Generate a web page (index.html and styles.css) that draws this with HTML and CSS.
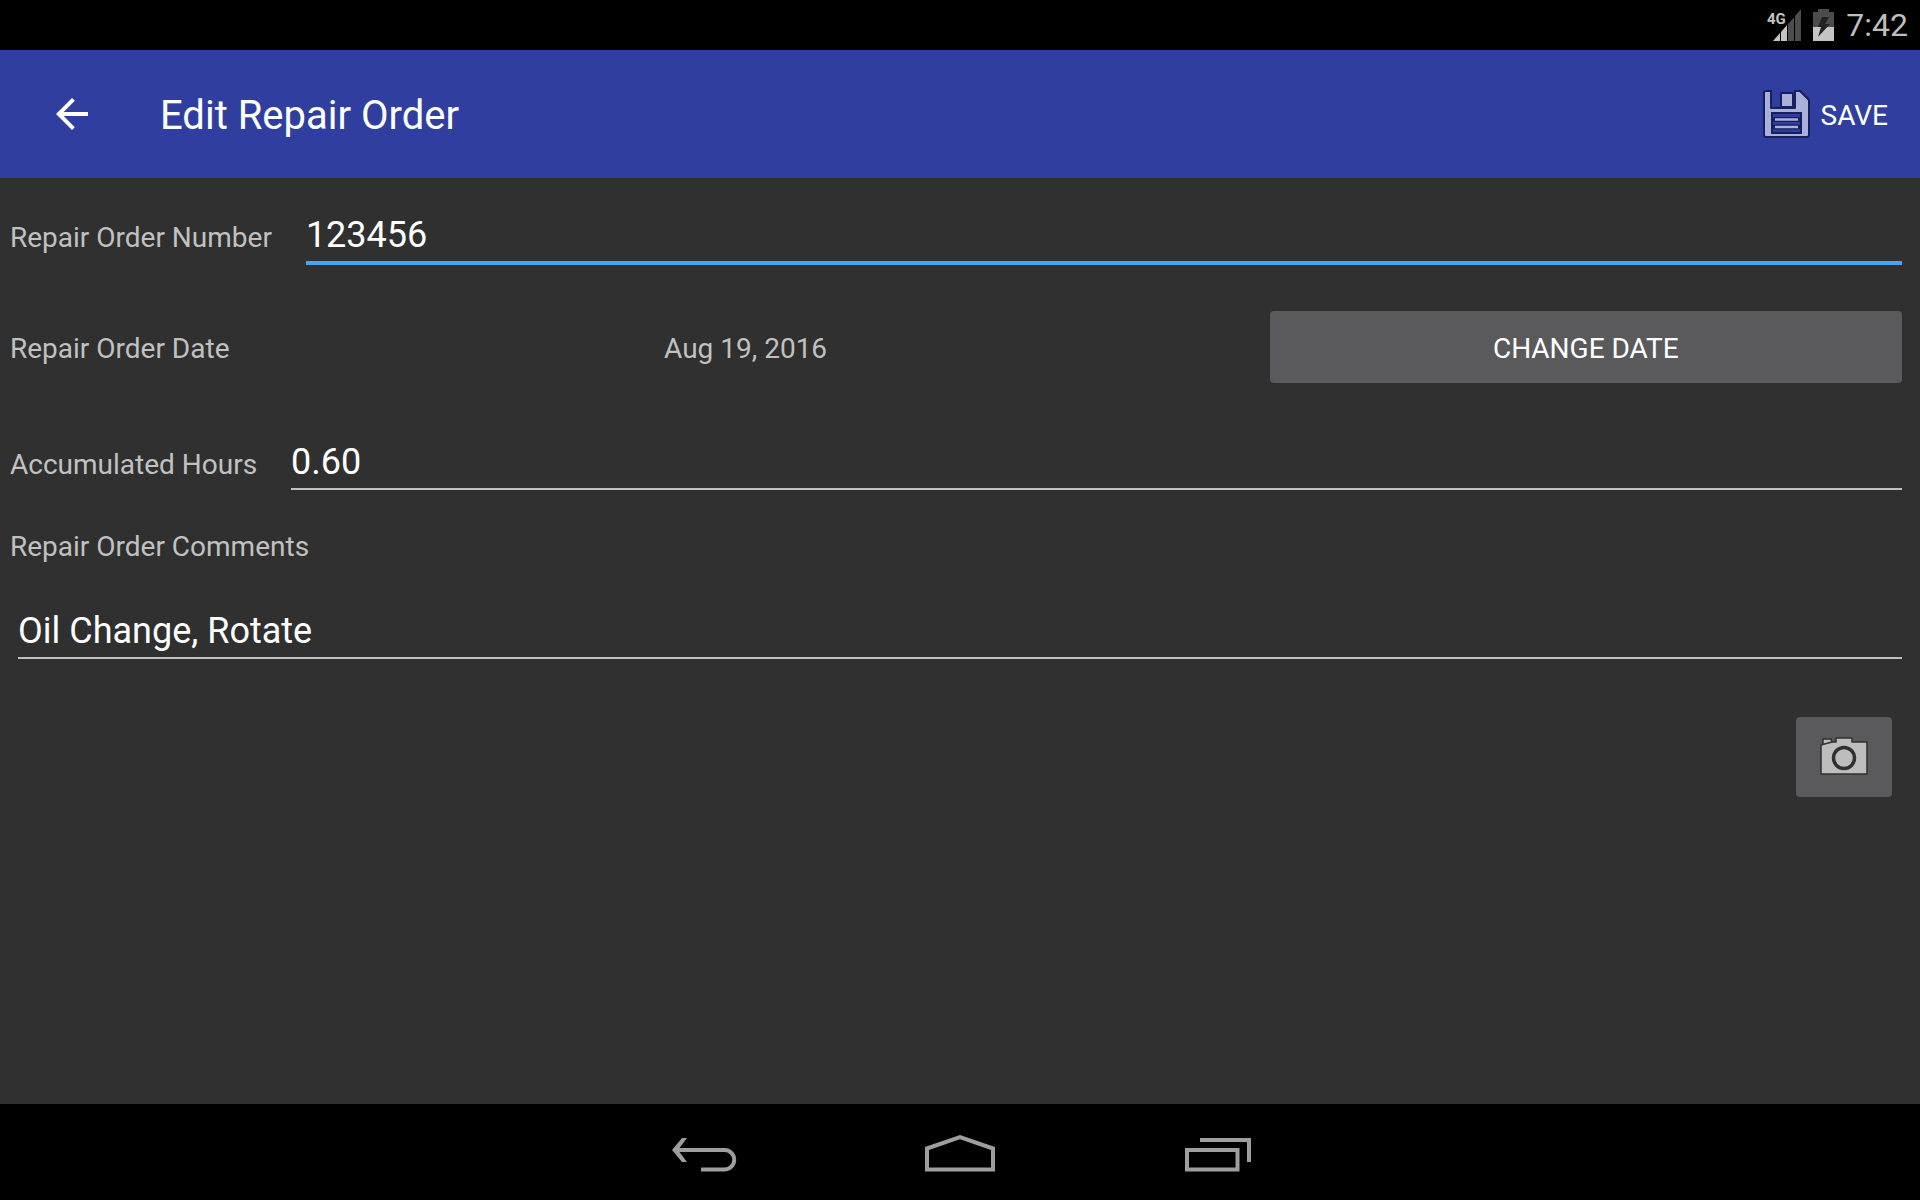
FILE: index.html
```
<!DOCTYPE html>
<html lang="en">
<head>
    <meta charset="UTF-8">
    <meta name="viewport" content="width=device-width, initial-scale=1.0">
    <title>Edit Repair Order</title>
    <link rel="stylesheet" href="styles.css">
</head>
<body>
    <div class="status-bar">
        <svg class="signal-icon" width="36" height="32" viewBox="0 0 36 32" role="img" aria-label="4G signal">
            <path fill="#c4c4c4" d="M6 32L13 24V32ZM14 23L20 16V32H14Z"/>
            <path fill="#4c4c4c" d="M21 15L27 8.300V32H21ZM28 7L34 0V32H28Z"/>
            <text class="signal-type" x="0" y="15">4G</text>
        </svg>
        <svg class="battery-icon" width="21" height="32" viewBox="0 0 21 32" role="img" aria-label="Battery charging">
            <path fill="#4c4c4c" d="M5 0H16V3H21V18H0V3H5Z"/>
            <path fill="#c4c4c4" d="M0 18H21V32H0Z"/>
            <path fill="#222" d="M9 8H16L12 15H17L5 28L8 18H5Z"/>
        </svg>
        <span class="clock">7:42</span>
    </div>

    <header class="app-bar">
        <button class="back-button" type="button" aria-label="Back">
            <svg width="48" height="48" viewBox="0 0 24 24">
                <path fill="#fff" d="M20 11H7.830l5.590-5.590L12 4l-8 8 8 8 1.410-1.410L7.830 13H20v-2z"/>
            </svg>
        </button>
        <h1 class="title">Edit Repair Order</h1>
        <button class="save-button" type="submit" form="order-form">
            <svg width="48" height="48" viewBox="0 0 48 48">
                <path fill="#abb0da" stroke="#171f5c" stroke-width="2" stroke-linejoin="round" d="M3 1H8V18H32V1H37L46 10V45Q46 47 44 47H3Q1 47 1 45V3Q1 1 3 1Z"/>
                <rect x="18" y="3" width="12" height="14" rx="1" fill="#abb0da" stroke="#171f5c" stroke-width="2"/>
                <rect x="9" y="23" width="29" height="20" fill="#303f9f" stroke="#171f5c" stroke-width="2"/>
                <path fill="none" stroke="#171f5c" stroke-width="5" stroke-linecap="round" d="M12 29.500H35M12 37H35"/>
                <path fill="none" stroke="#abb0da" stroke-width="2.500" d="M12 29.500H35M12 37H35"/>
            </svg>
            <span>SAVE</span>
        </button>
    </header>

    <main>
        <form class="order-form" id="order-form">
            <div class="row">
                <label for="order-number">Repair Order Number</label>
                <input class="active" type="text" id="order-number" value="123456">
            </div>
            <div class="date-row">
                <span>Repair Order Date</span>
                <span>Aug 19, 2016</span>
                <button class="date-button" type="button">CHANGE DATE</button>
            </div>
            <div class="row">
                <label for="hours">Accumulated Hours</label>
                <input type="text" id="hours" value="0.60">
            </div>
            <div class="comments">
                <label for="comments">Repair Order Comments</label>
                <input type="text" id="comments" value="Oil Change, Rotate">
            </div>
            <button class="camera-button" type="button" aria-label="Add photo">
                <svg width="48" height="40" viewBox="0 0 48 40">
                    <path fill="#bdbdbd" stroke="#303030" stroke-width="1.500" stroke-linejoin="round" d="M3 8V2H11L12 5"/>
                    <path fill="#bdbdbd" stroke="#303030" stroke-width="1.500" stroke-linejoin="round" d="M1 8L12 5H16V1H32V5H47V37H1Z"/>
                    <circle cx="24" cy="21" r="10.500" fill="#bdbdbd" stroke="#303030" stroke-width="3.500"/>
                </svg>
            </button>
        </form>
    </main>

    <nav class="nav-bar">
        <button type="button" aria-label="System back">
            <svg width="80" height="48" viewBox="0 0 80 48">
                <path class="line" d="M11 22H60.500A9.750 9.750 0 0 1 60.500 41.500H37"/>
                <path fill="#9e9e9e" d="M18 10H23L14 22L23 34H18L8 22Z"/>
            </svg>
        </button>
        <button type="button" aria-label="Home">
            <svg width="80" height="48" viewBox="0 0 80 48">
                <path class="line" d="M7 20.500L40 9L73 20.500V41.500H7Z"/>
            </svg>
        </button>
        <button type="button" aria-label="Recent apps">
            <svg width="80" height="48" viewBox="0 0 80 48">
                <path class="line" d="M11 22H61.500V41.500H11ZM24 12H73V34"/>
            </svg>
        </button>
    </nav>
</body>
</html>
```

FILE: styles.css
```
* {
    box-sizing: border-box;
}
body {
    font-family: Roboto, sans-serif;
    font-size: 28px;
    line-height: 34px;
    background-color: #303030;
    color: #c1c1c1;
    margin: 0;
    display: flex;
    flex-direction: column;
    min-height: 100vh;
}
button {
    font: inherit;
    color: #ffffff;
    background: none;
    border: none;
    padding: 0;
    cursor: pointer;
}
svg {
    display: block;
}

/* status bar */
.status-bar {
    display: flex;
    justify-content: flex-end;
    align-items: center;
    height: 50px;
    padding: 0 12px;
    background-color: #000000;
}
.signal-icon {
    margin-right: 10px;
}
.signal-type {
    font-size: 15px;
    font-weight: bold;
    fill: #c4c4c4;
}
.battery-icon {
    margin-right: 12px;
}
.clock {
    font-size: 32px;
    color: #bebebe;
}

/* app bar */
.app-bar {
    display: flex;
    align-items: center;
    height: 128px;
    padding: 0 32px 0 48px;
    background-color: #303f9f;
}
.title {
    flex: 1;
    margin: 0 0 0 64px;
    padding-top: 4px;
    font-size: 40px;
    line-height: 48px;
    font-weight: normal;
    color: #ffffff;
}
.save-button {
    display: flex;
    align-items: center;
    gap: 10px;
}
.save-button span {
    padding-top: 4px;
}

/* form */
main {
    flex: 1;
}
.order-form {
    display: flex;
    flex-direction: column;
    padding: 36px 18px 36px 10px;
}
.row {
    display: flex;
    align-items: baseline;
    gap: 34px;
}
input {
    flex: 1;
    min-width: 0;
    font-family: inherit;
    font-size: 36px;
    line-height: 42px;
    height: 49px;
    padding: 0 0 5px;
    color: #ffffff;
    background: none;
    border: none;
    border-bottom: 2px solid #c1c1c1;
    border-radius: 0;
    outline: none;
}
input.active,
input:focus {
    height: 51px;
    border-bottom: 4px solid #42a5f5;
}
.date-row {
    display: flex;
    align-items: center;
    margin: 46px 0 58px;
}
.date-row > * {
    flex: 1 1 auto;
    padding-top: 4px;
}
.date-row .date-button {
    height: 72px;
    margin-left: 8px;
    padding: 4px 6px 0;
    background-color: #5a5a5c;
    border-radius: 4px;
}
.comments {
    display: flex;
    flex-direction: column;
    gap: 46px;
    margin-top: 40px;
}
.comments input {
    flex: none;
    margin-left: 8px;
}
.camera-button {
    display: flex;
    justify-content: center;
    align-items: center;
    align-self: flex-end;
    width: 96px;
    height: 80px;
    margin: 58px 10px 0 0;
    background-color: #5a5a5c;
    border-radius: 4px;
}

/* navigation bar */
.nav-bar {
    display: flex;
    justify-content: center;
    height: 96px;
    background-color: #000000;
}
.nav-bar button {
    display: flex;
    justify-content: center;
    align-items: center;
    width: 256px;
}
.line {
    fill: none;
    stroke: #9e9e9e;
    stroke-width: 4;
}
```
